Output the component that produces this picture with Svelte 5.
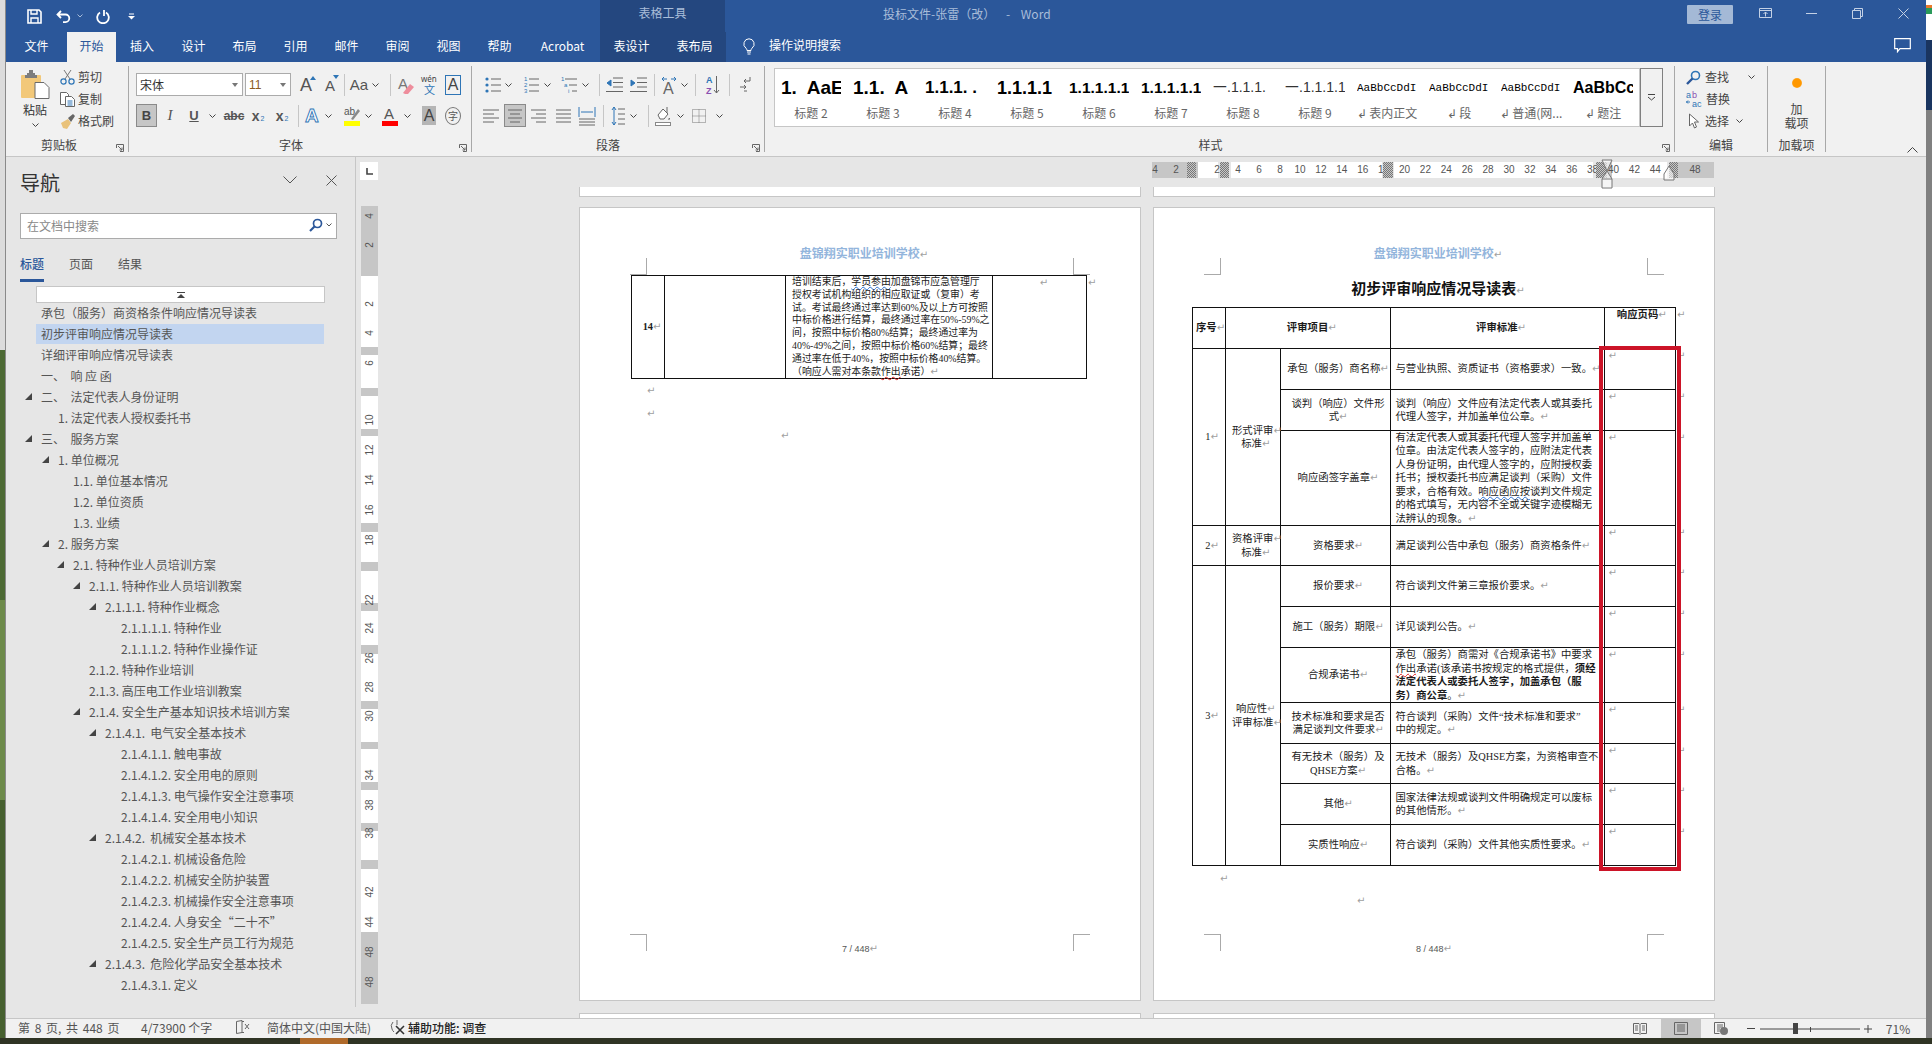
<script>
  const tools = (origin, items) => {
    let cur = origin;
    return items.map(([k, x, w]) => {
      const ml = x - w / 2 - cur;
      cur = x + w / 2;
      return { k, w, ml };
    });
  };
  const stroke = (w, h, d, c = '#666', sw = 1) =>
    `<svg width="${w}" height="${h}" viewBox="0 0 ${w} ${h}"><path d="${d}" fill="none" stroke="${c}" stroke-width="${sw}"/></svg>`;
  const B = '#2e75b6';
  const I = {
    chev: stroke(7, 4, 'M.5.5 3.5 3.5 6.5.5', '#444'),
    sep: '<span class="vsep"></span>',
    name: '<span class="combo"><b class="cn">宋体</b><em></em></span>',
    size: '<span class="combo"><b class="cs">11</b><em></em></span>',
    grow: `<span class="fa big">A<svg width="6" height="4"><path d="M0 4 3 0 6 4" fill="${B}"/></svg></span>`,
    shrink: `<span class="fa small">A<svg width="6" height="4"><path d="M0 0 3 4 6 0" fill="${B}"/></svg></span>`,
    aa: '<span class="fa aa">Aa</span>',
    eraser: `<svg width="16" height="20"><text x="0" y="14" font-size="15" font-family="Liberation Sans" fill="#777">A</text><path d="M5 18 12 9l4 3-6 7H7z" fill="#ee8d9c"/></svg>`,
    wen: `<svg width="16" height="21"><text x="0" y="8" font-size="8" font-family="Noto Sans" fill="#444">wén</text><text x="3" y="20" font-size="11" font-family="Noto Sans CJK SC" fill="${B}">文</text></svg>`,
    abox: '<span class="abox">A</span>',
    b: '<span class="act bold">B</span>',
    i: '<span class="fa it">I</span>',
    u: '<span class="fa un">U</span>',
    abc: '<span class="fa st">abc</span>',
    sub: `<span class="fa xs">x<small>2</small></span>`,
    sup: `<span class="fa xs">x<sup>2</sup></span>`,
    glow: `<svg width="16" height="20"><text x="0" y="16" font-size="19" font-weight="bold" font-family="Liberation Sans" fill="#fff" stroke="${B}" stroke-width=".9">A</text></svg>`,
    mark: `<svg width="16" height="20"><text x="0" y="9" font-size="10" font-family="Liberation Sans" fill="#555">ab</text><path d="M7 13 14 3l2 2-7 9z" fill="#8a8a8a"/><rect y="15" width="16" height="5" fill="#ff0"/></svg>`,
    color: `<svg width="16" height="20"><text x="2" y="13" font-size="15" font-family="Liberation Sans" fill="#555">A</text><rect y="15" width="16" height="5" fill="#f00"/></svg>`,
    shade: '<span class="ashade">A</span>',
    zi: '<span class="zi">字</span>',
    bul: `<svg width="16" height="18"><g fill="${B}"><circle cx="2" cy="3" r="1.6"/><circle cx="2" cy="9" r="1.6"/><circle cx="2" cy="15" r="1.6"/></g><path d="M6 3h10M6 9h10M6 15h10" stroke="#666"/></svg>`,
    num: `<svg width="15" height="20"><g fill="${B}" font-size="6" font-family="Liberation Sans"><text x="0" y="6">1</text><text x="0" y="12">2</text><text x="0" y="18">3</text></g><path d="M5 4h10M5 10h10M5 16h10" stroke="#666"/></svg>`,
    multi: `<svg width="16" height="20"><g fill="${B}" font-size="6" font-family="Liberation Sans"><text x="0" y="6">1</text><text x="3" y="12">a</text><text x="7" y="18">i</text></g><path d="M4 4h12M8 10h8M11 16h5" stroke="#666"/></svg>`,
    dec: `<svg width="17" height="16"><path d="M7 1h10M7 5.500h10M7 10h10M0 14.500h17" stroke="#666"/><path d="M5 3 1 6l4 3z" fill="${B}" stroke="${B}"/></svg>`,
    inc: `<svg width="17" height="16"><path d="M7 1h10M7 5.500h10M7 10h10M0 14.500h17" stroke="#666"/><path d="M1 3l4 3-4 3z" fill="${B}" stroke="${B}"/></svg>`,
    trans: `<svg width="16" height="20"><path d="M1 4h5M15 4h-5M3 2 1 4l2 2M13 2l2 2-2 2" fill="none" stroke="${B}"/><text x="2" y="19" font-size="16" font-family="Liberation Sans" fill="#666">A</text></svg>`,
    az: `<svg width="14" height="22"><text x="0" y="9" font-size="9" font-weight="bold" font-family="Liberation Sans" fill="${B}">A</text><text x="0" y="20" font-size="9" font-weight="bold" font-family="Liberation Sans" fill="#8a4fb0">Z</text><path d="M10.500 2v17M8 16l2.500 3 2.500-3" fill="none" stroke="#666"/></svg>`,
    ret: `<svg width="11" height="18"><path d="M10 1v4H4M6 3 4 5l2 2M0 11h6M4 9l2 2-2 2M4 15h3" fill="none" stroke="#666"/></svg>`,
    al: stroke(16, 14, 'M0 1h16M0 5h11M0 9h16M0 13h11'),
    ac: '<span class="act">' + stroke(14, 14, 'M0 1h14M2 5h10M0 9h14M2 13h10') + '</span>',
    ar: stroke(15, 14, 'M0 1h15M5 5h10M0 9h15M5 13h10'),
    aj: stroke(15, 14, 'M0 1h15M0 5h15M0 9h15M0 13h15'),
    ad: `<svg width="16" height="20"><path d="M0 1v10M16 1v10M2 6h12" stroke="${B}"/><path d="M0 13h16M0 16h16M0 19h16" stroke="#666"/></svg>`,
    ls: `<svg width="14" height="20"><path d="M3 1v18M1 4l2-3 2 3M1 16l2 3 2-3" fill="none" stroke="${B}"/><path d="M7 3h7M7 8h7M7 13h7M7 18h7" stroke="#666"/></svg>`,
    bucket: `<svg width="16" height="20"><path d="M3 9 8 3l5 5-4 5H5z" fill="#fff" stroke="#666"/><path d="M12 1v6" stroke="#666"/><path d="M14 12c-2 2 1 3 1 0z" fill="#666"/><rect x=".5" y="16.500" width="15" height="3" fill="#fff" stroke="#888"/></svg>`,
    border: `<svg width="14" height="14"><path d="M.5.5h13v13H.5zM7 .5v13M.5 7h13" fill="none" stroke="#777" stroke-dasharray="1 1"/></svg>`
  };
  const fontRow1 = tools(130, [['name', 190.5, 107], ['size', 269, 46], ['grow', 307, 18], ['shrink', 331, 16], ['sep', 345, 1], ['aa', 360, 18], ['chev', 376, 7], ['sep', 391, 1], ['eraser', 407, 16], ['wen', 430, 16], ['abox', 454, 16]]);
  const fontRow2 = tools(130, [['b', 147.5, 21], ['i', 171, 10], ['u', 195, 12], ['chev', 213, 7], ['abc', 235, 20], ['sub', 259, 14], ['sup', 283, 14], ['sep', 299, 1], ['glow', 314, 16], ['chev', 329, 7], ['mark', 353, 16], ['chev', 369, 7], ['color', 391, 16], ['chev', 408, 7], ['shade', 430, 14], ['zi', 454, 16]]);
  const paraRow1 = tools(473, [['bul', 494, 16], ['chev', 509, 7], ['num', 532, 15], ['chev', 548, 7], ['multi', 570, 16], ['chev', 586, 7], ['sep', 600, 1], ['dec', 615, 17], ['inc', 639, 17], ['sep', 655, 1], ['trans', 670, 16], ['chev', 685, 7], ['sep', 696, 1], ['az', 714, 14], ['sep', 730, 1], ['ret', 746, 11]]);
  const paraRow2 = tools(473, [['al', 492, 16], ['ac', 516, 22], ['ar', 539, 15], ['aj', 564, 15], ['ad', 588, 16], ['sep', 604, 1], ['ls', 619, 14], ['chev', 634, 7], ['sep', 649, 1], ['bucket', 664, 16], ['chev', 681, 7], ['border', 700, 14], ['chev', 720, 7]]);

  const tabs = [['文件', 61], ['开始', 49, 'on'], ['插入', 52], ['设计', 51], ['布局', 51], ['引用', 51], ['邮件', 51], ['审阅', 51], ['视图', 51], ['帮助', 51], ['Acrobat', 75], ['表设计', 63, 'ctx'], ['表布局', 63, 'ctx']];

  const styles = [
    ['1.  AaE', '标题 2', 'h1'], ['1.1.  A', '标题 3', 'h1'], ['1.1.1. .', '标题 4', 'h2'], ['1.1.1.1', '标题 5', 'h2b'],
    ['1.1.1.1.1', '标题 6', 'h3'], ['1.1.1.1.1', '标题 7', 'h3'], ['一.1.1.1.', '标题 8', 'h4'], ['一.1.1.1.1', '标题 9', 'h4'],
    ['AaBbCcDdI', '↲ 表内正文', 'h5'], ['AaBbCcDdI', '↲ 段', 'h5'], ['AaBbCcDdI', '↲ 普通(网...', 'h5'], ['AaBbCc', '↲ 题注', 'h6']
  ];

  const tree = [
    [41, 0, '承包（服务）商资格条件响应情况导读表'], [41, 0, '初步评审响应情况导读表', 1], [41, 0, '详细评审响应情况导读表'], [41, 0, '一、  响 应 函'],
    [41, 1, '二、  法定代表人身份证明'], [58, 0, '1. 法定代表人授权委托书'], [41, 1, '三、  服务方案'], [58, 1, '1. 单位概况'],
    [73, 0, '1.1. 单位基本情况'], [73, 0, '1.2. 单位资质'], [73, 0, '1.3. 业绩'], [58, 1, '2. 服务方案'],
    [73, 1, '2.1. 特种作业人员培训方案'], [89, 1, '2.1.1. 特种作业人员培训教案'], [105, 1, '2.1.1.1. 特种作业概念'],
    [121, 0, '2.1.1.1.1. 特种作业'], [121, 0, '2.1.1.1.2. 特种作业操作证'], [89, 0, '2.1.2. 特种作业培训'], [89, 0, '2.1.3. 高压电工作业培训教案'],
    [89, 1, '2.1.4. 安全生产基本知识技术培训方案'], [105, 1, '2.1.4.1.  电气安全基本技术'], [121, 0, '2.1.4.1.1. 触电事故'], [121, 0, '2.1.4.1.2. 安全用电的原则'],
    [121, 0, '2.1.4.1.3. 电气操作安全注意事项'], [121, 0, '2.1.4.1.4. 安全用电小知识'], [105, 1, '2.1.4.2.  机械安全基本技术'], [121, 0, '2.1.4.2.1. 机械设备危险'],
    [121, 0, '2.1.4.2.2. 机械安全防护装置'], [121, 0, '2.1.4.2.3. 机械操作安全注意事项'], [121, 0, '2.1.4.2.4. 人身安全“二十不”'], [121, 0, '2.1.4.2.5. 安全生产员工行为规范'],
    [105, 1, '2.1.4.3.  危险化学品安全基本技术'], [121, 0, '2.1.4.3.1. 定义']
  ];

  const hseg = [[35, 'g'], [9, 'h'], [2, 'g'], [20, 'w'], [2, 'x'], [9, 'h'], [2, 'x'], [151, 'w'], [1, 'x'], [10, 'h'], [1, 'x'], [199, 'w'], [3, 'x'], [11, 'h'], [5, 'g'], [55, 'w'], [2, 'x'], [9, 'h'], [36, 'g']];
  const hnums = [[3, '4'], [24, '2'], [65, '2'], [86, '4'], [107, '6'], [128, '8']];
  for (let n = 10, x = 148; n <= 44; n += 2, x += 20.9) hnums.push([x, String(n)]);
  hnums.push([543, '48']);

  const gaps = [[206, 276], [347, 355], [388, 396], [429, 436], [523, 532], [562, 571], [603, 611], [645, 654], [701, 709], [742, 749], [782, 790], [823, 831], [860, 869], [932, 1004]];
  const vseg = [];
  gaps.forEach(([a, b], i) => {
    vseg.push([b - a, 'g']);
    if (gaps[i + 1]) vseg.push([gaps[i + 1][0] - b, 'w']);
  });
  const vnums = [[216, '4'], [245, '2'], [304, '2'], [333, '4'], [363, '6'], [420, '10'], [450, '12'], [480, '14'], [510, '16'], [540, '18'], [600, '22'], [628, '24'], [658, '26'], [687, '28'], [716, '30'], [775, '34'], [805, '38'], [833, '38'], [892, '42'], [922, '44'], [952, '48'], [982, '48']];

  const fmt = (s) => s.replaceAll('↵', '<i class="pm">↵</i>');

  const colsR = [33, 54.5, 110, 214, 71.5];
  const rowsR = [
    { h: 41, c: [{ t: '1↵', rs: 3 }, { t: '形式评审↵\n标准↵', rs: 3 }], a: '承包（服务）商名称↵', b: '与营业执照、资质证书（资格要求）一致。↵' },
    { h: 41, a: '谈判（响应）文件形\n式↵', b: '谈判（响应）文件应有法定代表人或其委托\n代理人签字，并加盖单位公章。↵' },
    { h: 95, a: '响应函签字盖章↵', b: '有法定代表人或其委托代理人签字并加盖单\n位章。由法定代表人签字的，应附法定代表\n人身份证明，由代理人签字的，应附授权委\n托书；授权委托书应满足谈判（采购）文件\n要求，合格有效。<u class="wb">响应函应按</u>谈判文件规定\n的格式填写，无内容不全或关键字迹模糊无\n法辨认的现象。↵' },
    { h: 40, c: [{ t: '2↵' }, { t: '资格评审↵\n标准↵' }], a: '资格要求↵', b: '满足谈判公告中承包（服务）商资格条件↵' },
    { h: 41, c: [{ t: '3↵', rs: 7 }, { t: '响应性↵\n评审标准↵', rs: 7 }], a: '报价要求↵', b: '符合谈判文件第三章报价要求。↵' },
    { h: 41, a: '施工（服务）期限↵', b: '详见谈判公告。↵' },
    { h: 55, a: '合规承诺书↵', b: '承包（服务）商需对《合规承诺书》中要求\n<u class="wr">作出</u>承诺(该承诺书按规定的格式提供，<b>须经\n法定代表人或委托人签字，加盖承包（服\n务）商公章</b>。↵' },
    { h: 41, a: '技术标准和要求是否\n满足谈判文件要求↵', b: '符合谈判（采购）文件“技术标准和要求”\n中的规定。↵' },
    { h: 40, a: '有无技术（服务）及\nQHSE方案↵', b: '无技术（服务）及QHSE方案，为资格审查不\n合格。↵' },
    { h: 41, a: '其他↵', b: '国家法律法规或谈判文件明确规定可以废标\n的其他情形。↵' },
    { h: 41, a: '实质性响应↵', b: '符合谈判（采购）文件其他实质性要求。↵' }
  ];
  const colsL = [33, 121, 207, 94];
  const leftText = '培训结束后，<u class="wb">学员参由</u>加盘锦市应急管理厅\n授权考试机构组织的相应取证或（复审）考\n试。考试最终通过率达到60%及以上方可按照\n中标价格进行结算，最终通过率在50%-59%之\n间，按照中标价格80%结算；最终通过率为\n40%-49%之间，按照中标价格60%结算；最终\n通过率在低于40%，按照中标价格40%结算。\n（响应人需对本条款<u class="wr">作出</u>承诺）↵';

  const statusRight = tools(1626, [
    ['read', 1640, 14], ['print', 1681, 40], ['web', 1721, 14], ['minus', 1751, 8], ['slider', 1810, 100], ['plus', 1868, 8], ['zoom', 1898, 28]
  ]);
  const S = {
    read: stroke(14, 14, 'M.5 1.500h5.500l1 1 1-1h5.500v10h-5.500l-1 1-1-1H.5zM7 2.500v9M2 4h3M2 6h3M2 8h3M9 4h3M9 6h3M9 8h3', '#666'),
    print: '<span class="printon">' + stroke(14, 13, 'M.5.5h13v12H.5zM3 3h8M3 5h8M3 7h8M3 9h8', '#666') + '</span>',
    web: `<svg width="14" height="13"><path d="M.5.5h10v5M.5.5v11h5M3 3h6M3 5h6M3 7h3M3 9h3" fill="none" stroke="#666"/><circle cx="10" cy="9" r="4" fill="#777"/></svg>`,
    minus: stroke(8, 3, 'M0 1.500h8', '#444'),
    plus: stroke(8, 8, 'M0 4h8M4 0v8', '#444'),
    slider: `<svg width="100" height="12"><path d="M0 6h100M50.500 4v5" stroke="#444" fill="none"/><rect x="33" y="0" width="5" height="11" fill="#444"/></svg>`,
    zoom: '<span class="pct">71%</span>'
  };
</script>

<div class="screen">
  <div class="desk">
    <div class="edge-left"></div>
    <div class="window">
      <header class="titlebar">
        <div class="qat">
          <svg class="q-save" width="15" height="15" viewBox="0 0 15 15"><path d="M1 1h11l2 2v11H1z" fill="none" stroke="#fff" stroke-width="1.600"/><path d="M4 1v4h6V1M4 14V9h7v5" fill="none" stroke="#fff" stroke-width="1.400"/></svg>
          <svg class="q-undo" width="15" height="15" viewBox="0 0 15 15"><path d="M5 2 1.500 5.500 5 9M2 5.500h7.500a3.800 3.800 0 0 1 0 7.600H7" fill="none" stroke="#fff" stroke-width="1.800"/></svg>
          <svg class="q-c" width="6" height="4" viewBox="0 0 6 4"><path d="M.5.5 3 3 5.500.5" fill="none" stroke="#a9bdd9"/></svg>
          <svg class="q-redo" width="14" height="15" viewBox="0 0 14 15"><path d="M4 3.500a5.800 5.800 0 1 0 6 0M8 1v6" fill="none" stroke="#fff" stroke-width="1.800"/></svg>
          <svg class="q-more" width="7" height="7" viewBox="0 0 7 7"><path d="M1 1h5" stroke="#fff"/><path d="M0 3h7L3.500 6.500z" fill="#fff"/></svg>
        </div>
        <div class="ctx-title">表格工具</div>
        <div class="doc-title">投标文件-张雷（改）    -    Word</div>
        <div class="win">
          <span class="login">登录</span>
          <span class="wc"><svg width="13" height="11"><path d="M.5.500h12v9H.5zM.5 2.500h12M6.500 8.500V4M4.500 6l2-2 2 2" fill="none" stroke="#c4d1e5"/></svg></span>
          <span class="wc"><svg width="11" height="1"><path d="M0 .5h11" stroke="#c4d1e5"/></svg></span>
          <span class="wc"><svg width="11" height="11"><path d="M.5 2.500h8v8h-8zM2.500 2.500v-2h8v8h-2" fill="none" stroke="#c4d1e5"/></svg></span>
          <span class="wc"><svg width="11" height="11"><path d="M.5.500l10 10M10.500.500l-10 10" fill="none" stroke="#c4d1e5"/></svg></span>
        </div>
      </header>

      <nav class="tabbar">
        {#each tabs as [label, width, kind]}
          <span class="tab" class:on={kind === 'on'} class:ctx={kind === 'ctx'} style:width="{width}px">{label}</span>
        {/each}
        <svg class="bulb" width="12" height="17" viewBox="0 0 12 17"><path d="M6 .8a5.200 5.200 0 0 0-3 9.400c.7.600 1 1.500 1 2.300h4c0-.8.300-1.700 1-2.300A5.200 5.200 0 0 0 6 .8zM4 14h4M4.500 16h3" fill="none" stroke="#fff"/></svg>
        <span class="tell">操作说明搜索</span>
        <svg class="comment" width="17" height="15" viewBox="0 0 17 15"><path d="M.7.700h15.600v10H6l-2.500 3v-3H.7z" fill="none" stroke="#fff" stroke-width="1.200"/></svg>
      </nav>

      <section class="ribbon">
        <div class="group g-clip">
          <div class="clip-body">
            <div class="paste">
              <svg width="30" height="29" viewBox="0 0 30 29"><rect x="1" y="5" width="20" height="23" rx="1" fill="#f2c879"/><path d="M7 5V3h2V0h4v3h2v2h2v3H5V5z" fill="#7d7d7d"/><path d="M15 12.500h9l5 5V28.500H15z" fill="#fff" stroke="#6a6a6a"/></svg>
              <span class="paste-l">粘贴</span>
              {@html I.chev}
            </div>
            <div class="clip-list">
              <div class="line"><svg width="15" height="15" viewBox="0 0 15 15"><path d="M5 9 11 0M10 9 4 0" stroke="#777" fill="none"/><circle cx="3.500" cy="11.500" r="2.600" fill="none" stroke={B} stroke-width="1.200"/><circle cx="11.500" cy="11.500" r="2.600" fill="none" stroke={B} stroke-width="1.200"/></svg>剪切</div>
              <div class="line"><svg width="15" height="15" viewBox="0 0 15 15"><path d="M.5.500h6l2 2v10H.5z" fill="#fff" stroke="#666"/><path d="M5.500 4.500h6l3 3v7h-9z" fill="#fff" stroke="#666"/><path d="M7.500 9h5M7.500 11h5M7.500 13h5" stroke="#2e75b6"/></svg>复制</div>
              <div class="line"><svg width="15" height="15" viewBox="0 0 15 15"><path d="M1 9 8 5l3 4-4 6-4-1z" fill="#e9c27a"/><path d="M8 4l5-4 2 2-4 6z" fill="#666"/></svg>格式刷</div>
            </div>
          </div>
          <div class="g-label">剪贴板</div>
          <svg class="launch" width="8" height="8"><path d="M.5 4V.5H7.500V7.500H4M2 2l4 4M6 3.500V6H3.500" fill="none" stroke="#666"/></svg>
        </div>

        <div class="group g-font">
          <div class="row r1">{#each fontRow1 as t}<span class="tool" style:width="{t.w}px" style:margin-left="{t.ml}px">{@html I[t.k]}</span>{/each}</div>
          <div class="row r2">{#each fontRow2 as t}<span class="tool" style:width="{t.w}px" style:margin-left="{t.ml}px">{@html I[t.k]}</span>{/each}</div>
          <div class="g-label">字体</div>
          <svg class="launch" width="8" height="8"><path d="M.5 4V.5H7.500V7.500H4M2 2l4 4M6 3.500V6H3.500" fill="none" stroke="#666"/></svg>
        </div>

        <div class="group g-para">
          <div class="row r1">{#each paraRow1 as t}<span class="tool" style:width="{t.w}px" style:margin-left="{t.ml}px">{@html I[t.k]}</span>{/each}</div>
          <div class="row r2">{#each paraRow2 as t}<span class="tool" style:width="{t.w}px" style:margin-left="{t.ml}px">{@html I[t.k]}</span>{/each}</div>
          <div class="g-label">段落</div>
          <svg class="launch" width="8" height="8"><path d="M.5 4V.5H7.500V7.500H4M2 2l4 4M6 3.500V6H3.500" fill="none" stroke="#666"/></svg>
        </div>

        <div class="group g-styles">
          <div class="gallery">
            <div class="gal-items">
              {#each styles as [preview, caption, cls]}
                <div class="sty">
                  <div class="prev {cls}">{preview}</div>
                  <div class="cap">{caption}</div>
                </div>
              {/each}
            </div>
            <div class="gal-more"><svg width="9" height="7"><path d="M1 .5h7" stroke="#444"/><path d="M1 3l3.500 3L8 3" fill="none" stroke="#444"/></svg></div>
          </div>
          <div class="g-label">样式</div>
          <svg class="launch" width="8" height="8"><path d="M.5 4V.5H7.500V7.500H4M2 2l4 4M6 3.500V6H3.500" fill="none" stroke="#666"/></svg>
        </div>

        <div class="group g-edit">
          <div class="edit-list">
            <div class="line"><svg width="15" height="15" viewBox="0 0 15 15"><circle cx="9.500" cy="5.500" r="4" fill="none" stroke="#2e75b6" stroke-width="1.600"/><path d="M6.500 8.500 1 14" stroke="#2b579a" stroke-width="2.400"/></svg>查找<span class="c1">{@html I.chev}</span></div>
            <div class="line"><svg width="16" height="16" viewBox="0 0 16 16"><text x="0" y="7" font-size="9" font-family="Liberation Sans" fill="#2e75b6">a</text><text x="6" y="7" font-size="9" font-family="Liberation Sans" fill="#8a4fb0">b</text><text x="6" y="15.500" font-size="9" font-family="Liberation Sans" fill="#2e75b6">ac</text><path d="M0 11h4M2 9.500 .5 11 2 12.500" stroke="#2e75b6" fill="none"/></svg>替换</div>
            <div class="line"><svg width="15" height="17" viewBox="0 0 15 17"><path d="M3.500 1v12l3-3 2 5 2-1-2-5h4z" fill="#fff" stroke="#666"/></svg>选择<span class="c2">{@html I.chev}</span></div>
          </div>
          <div class="g-label">编辑</div>
        </div>

        <div class="group g-addin">
          <span class="dot"></span>
          <span class="add-txt">加<br />载项</span>
          <div class="g-label">加载项</div>
        </div>
        <svg class="collapse" width="11" height="6" viewBox="0 0 11 6"><path d="M.5 5.500l5-5 5 5" fill="none" stroke="#444"/></svg>
      </section>

      <main class="workspace">
        <aside class="nav">
          <div class="nav-head">
            <span class="nav-title">导航</span>
            <svg class="n-down" width="14" height="8" viewBox="0 0 14 8"><path d="M.5.500l6.500 6.500 6.500-6.500" fill="none" stroke="#555"/></svg>
            <svg class="n-close" width="11" height="11" viewBox="0 0 11 11"><path d="M.5.500l10 10M10.500.500l-10 10" fill="none" stroke="#555"/></svg>
          </div>
          <div class="search">
            <span>在文档中搜索</span>
            <svg class="s-ic" width="14" height="14" viewBox="0 0 14 14"><circle cx="8.500" cy="5.500" r="4" fill="none" stroke="#2b579a" stroke-width="1.700"/><path d="M5.500 8.500 1 13" stroke="#2b579a" stroke-width="2.200"/></svg>
            <svg class="s-c" width="6" height="4" viewBox="0 0 6 4"><path d="M.5.500 3 3 5.500.5" fill="none" stroke="#555"/></svg>
          </div>
          <div class="nav-tabs">
            <span class="nt on">标题</span><span class="nt">页面</span><span class="nt">结果</span>
          </div>
          <div class="tree-up"><svg width="8" height="6" viewBox="0 0 8 6"><path d="M0 .5h8" stroke="#444"/><path d="M0 6l4-4 4 4z" fill="#444"/></svg></div>
          <div class="tree">
            {#each tree as [x, arrow, text, sel]}
              <div class="node" class:sel style:padding-left="{x - 36}px">
                <span class="arr">{#if arrow}<svg width="7" height="7" viewBox="0 0 7 7"><path d="M7 0v7H0z" fill="#444"/></svg>{/if}</span>{text}
              </div>
            {/each}
          </div>
        </aside>

        <div class="vcol">
          <div class="corner"><svg width="7" height="7" viewBox="0 0 7 7"><path d="M1 0v6h6" fill="none" stroke="#444" stroke-width="1.600"/></svg></div>
          <div class="vruler">
            {#each vseg as [h, t]}<div class="seg-{t}" style:height="{h}px"></div>{/each}
            {#each vnums as [y, n]}<span class="vnum" style:top="{y - 206 - 8}px">{n}</span>{/each}
          </div>
        </div>

        <div class="doc">
          <div class="hruler">
            {#each hnums as [x, n]}<span class="hnum" style:left="{x}px">{n}</span>{/each}
            <div class="hsegs">
              {#each hseg as [w, t]}<div class="seg-{t}" style:width="{w}px"></div>{/each}
            </div>
            <svg class="ind-a" width="12" height="30" viewBox="0 0 12 30"><path d="M1 1h10L6 12l5 8v9H1v-9l5-8z" fill="#fff" stroke="#777" fill-opacity=".6"/><path d="M1 20h10" stroke="#777"/></svg>
            <svg class="ind-b" width="12" height="16" viewBox="0 0 12 16"><path d="M6 1l5 8v6H1V9z" fill="#fff" stroke="#777" fill-opacity=".6"/></svg>
          </div>

          <div class="pages">
            <div class="pcol">
              <div class="strip top"></div>
              <article class="page">
                <span class="crop tl"></span><span class="crop tr"></span><span class="crop bl"></span><span class="crop br"></span>
                <div class="hdr">盘锦翔实职业培训学校<i class="pm">↵</i></div>
                <table class="tl-table">
                  <colgroup>{#each colsL as w}<col style:width="{w}px" />{/each}</colgroup>
                  <tbody>
                    <tr>
                      <td class="c num14"><b>14</b><i class="pm">↵</i></td>
                      <td></td>
                      <td class="body-l">{@html fmt(leftText)}</td>
                      <td class="c top-m"><i class="pm">↵</i><i class="pm end">↵</i></td>
                    </tr>
                  </tbody>
                </table>
                <div class="mk m1"><i class="pm">↵</i></div>
                <div class="mk m2"><i class="pm">↵</i></div>
                <div class="mk m3"><i class="pm">↵</i></div>
                <div class="foot">7 / 448<i class="pm">↵</i></div>
              </article>
              <div class="strip bottom"></div>
            </div>

            <div class="pcol">
              <div class="strip top"></div>
              <article class="page">
                <span class="crop tl"></span><span class="crop tr"></span><span class="crop bl"></span><span class="crop br"></span>
                <div class="hdr">盘锦翔实职业培训学校<i class="pm">↵</i></div>
                <h1 class="ttl">初步评审响应情况导读表<i class="pm">↵</i></h1>
                <table class="tr-table">
                  <colgroup>{#each colsR as w}<col style:width="{w}px" />{/each}</colgroup>
                  <tbody>
                    <tr class="hd">
                      <td class="c xh"><b>序号</b><i class="pm">↵</i></td>
                      <td class="c ph8" colspan="2"><b>评审项目</b><i class="pm">↵</i></td>
                      <td class="c ph8"><b>评审标准</b><i class="pm">↵</i></td>
                      <td class="c vtop"><b>响应页码</b><i class="pm">↵</i><i class="pm end">↵</i></td>
                    </tr>
                    {#each rowsR as r}
                      <tr style:height="{r.h}px">
                        {#if r.c}{#each r.c as cell}<td class="c ph6" rowspan={cell.rs || 1}>{@html fmt(cell.t)}</td>{/each}{/if}
                        <td class="c ph6">{@html fmt(r.a)}</td>
                        <td class="std"><div class="fit">{@html fmt(r.b)}</div></td>
                        <td class="resp"><i class="pm">↵</i><i class="pm end">↵</i></td>
                      </tr>
                    {/each}
                  </tbody>
                </table>
                <div class="mk m4"><i class="pm">↵</i></div>
                <div class="mk m5"><i class="pm">↵</i></div>
                <div class="foot">8 / 448<i class="pm">↵</i></div>
                <div class="redbox"></div>
              </article>
              <div class="strip bottom"></div>
            </div>
          </div>
        </div>
      </main>

      <footer class="status">
        <span class="st-first">第 8 页, 共 448 页</span>
        <span>4/73900 个字</span>
        <span class="st-ic"><svg width="14" height="14" viewBox="0 0 14 14"><path d="M.5 1.500 6 .5v12l-5.500 1zM6 1.500h2M6 12.500h2" fill="none" stroke="#666"/><path d="M9 4l4 5M13 4 9 9" stroke="#666" fill="none"/></svg></span>
        <span>简体中文(中国大陆)</span>
        <span class="st-ic"><svg width="16" height="16" viewBox="0 0 16 16"><path d="M8 1v5M4 3a6 6 0 0 0-1 7 6 6 0 0 0 2 3" fill="none" stroke="#666"/><path d="M7 7l8 8M15 7l-8 8" stroke="#333" stroke-width="1.600"/></svg></span>
        <span class="acc">辅助功能: 调查</span>
        <div class="st-right">
          {#each statusRight as t}<span class="tool st-tool" style:width="{t.w}px" style:margin-left="{t.ml}px">{@html S[t.k]}</span>{/each}
        </div>
      </footer>
    </div>
    <div class="edge-right"><span class="er-a"></span><span class="er-b"></span><span class="er-c"></span></div>
  </div>
  <div class="taskbar"><span></span></div>
</div>

<style>
  :global(body) { margin: 0; background: #2f3424; overflow: hidden; }
  .screen { width: 1932px; height: 1044px; display: flex; flex-direction: column; font-family: "Noto Sans CJK SC", sans-serif; font-size: 12px; color: #444; }
  .desk { display: flex; height: 1038px; }
  .edge-left { width: 5px; background: linear-gradient(#dcdcdc 0 350px, #4d6a35 350px 600px, #6d8a4a 600px 800px, #46602f 800px); }
  .window { width: 1921px; display: flex; flex-direction: column; background: #e6e6e6; border-left: 1px solid #8a8a8a; box-sizing: border-box; }
  .edge-right { width: 6px; display: flex; flex-direction: column; }
  .er-a { height: 40px; background: linear-gradient(#fff 0 5px, #e87a2c 5px 8px, #2a9a5a 8px 14px, #fff 14px); }
  .er-b { height: 70px; background: #1a3560; }
  .er-c { flex: 1; background: #808080; }
  .taskbar { height: 6px; background: #2f3424; padding-left: 300px; }
  .taskbar span { display: block; width: 48px; height: 6px; background: #b06a2a; }

  /* title */
  .titlebar { height: 32px; background: #2b579a; display: flex; align-items: stretch; flex: none; }
  .qat { width: 594px; display: flex; align-items: center; padding-left: 21px; box-sizing: border-box; }
  .q-undo { margin-left: 14px; }
  .q-c { margin-left: 6px; }
  .q-redo { margin-left: 13px; }
  .q-more { margin-left: 18px; }
  .ctx-title { width: 125px; background: #24477f; color: #a9bdd9; text-align: center; line-height: 26px; }
  .doc-title { margin-left: 158px; color: #a9bdd9; line-height: 28px; white-space: pre; }
  .win { margin-left: auto; display: flex; }
  .login { width: 46px; height: 19px; margin-top: 5px; margin-right: 9px; background: #a4b9d6; color: #2b579a; text-align: center; line-height: 19px; border-radius: 1px; }
  .wc { width: 46px; height: 27px; display: flex; align-items: center; justify-content: center; }

  /* tabs */
  .tabbar { height: 30px; background: #2b579a; display: flex; align-items: stretch; flex: none; position: relative; color: #fff; }
  .tab { display: flex; align-items: center; justify-content: center; padding-bottom: 3px; box-sizing: border-box; }
  .tab.on { background: #f1f1f1; color: #2b579a; }
  .tab.ctx { background: #24477f; }
  .bulb { margin: 6px 0 0 17px; }
  .tell { margin-left: 14px; line-height: 26px; }
  .comment { margin: 6px 15px 0 auto; }

  /* ribbon */
  .ribbon { height: 95px; flex: none; background: #f1f1f1; border-bottom: 1px solid #c6c6c6; box-sizing: border-box; display: flex; padding-top: 4px; position: relative; }
  .group { height: 86px; box-sizing: border-box; border-right: 1px solid #a8a8a8; position: relative; display: flex; flex-direction: column; flex: none; }
  .g-clip { width: 123px; }
  .g-font { width: 343px; }
  .g-para { width: 293px; }
  .g-styles { width: 910px; }
  .g-edit { width: 93px; }
  .g-addin { width: 58px; align-items: center; }
  .g-label { margin-top: auto; margin-bottom: -1px; width: 100%; box-sizing: border-box; text-align: center; line-height: 16px; color: #444; }
  .g-clip .g-label { padding-right: 16px; }
  .g-font .g-label { padding-right: 18px; }
  .g-para .g-label { padding-right: 20px; }
  .g-styles .g-label { padding-right: 18px; }
  .launch { position: absolute; right: 4px; bottom: 0; }
  .row { display: flex; align-items: center; height: 23px; }
  .r1 { margin-top: 7px; }
  .r2 { margin-top: 8px; }
  .tool { display: flex; align-items: center; justify-content: center; flex: none; height: 23px; }
  .tool :global(svg) { display: block; flex: none; overflow: visible; }
  .tool :global(.vsep) { width: 1px; height: 22px; background: #c6c6c6; }
  .tool :global(.combo) { width: 100%; height: 23px; box-sizing: border-box; background: #fff; border: 1px solid #ababab; display: flex; align-items: center; padding: 0 3px; position: relative; }
  .tool :global(.combo b) { font-weight: 400; color: #333; }
  .tool :global(.combo .cs) { color: #8a5a20; font-family: "Liberation Sans", sans-serif; }
  .tool :global(.combo em) { position: absolute; right: 4px; top: 9px; border: 3px solid transparent; border-top: 4px solid #777; border-bottom: 0; }
  .tool :global(.fa) { font-family: "Liberation Sans", sans-serif; color: #555; display: flex; position: relative; }
  .tool :global(.big) { font-size: 18px; line-height: 20px; }
  .tool :global(.small) { font-size: 15px; line-height: 20px; padding-top: 2px; }
  .tool :global(.big svg), .tool :global(.small svg) { position: absolute; right: -4px; top: 1px; }
  .tool :global(.aa) { font-size: 15px; }
  .tool :global(.it) { font-style: italic; font-family: "Liberation Serif", serif; font-size: 15px; }
  .tool :global(.un) { font-size: 13px; font-weight: 700; text-decoration: underline; }
  .tool :global(.st) { font-size: 12px; font-weight: 700; text-decoration: line-through; }
  .tool :global(.xs) { font-size: 14px; font-weight: 700; align-items: baseline; }
  .tool :global(.xs small) { font-size: 7px; font-weight: 400; color: #2e75b6; margin-left: 1px; }
  .tool :global(.xs sup) { font-size: 7px; font-weight: 400; color: #2e75b6; margin-left: 1px; line-height: 0; }
  .tool :global(.abox) { width: 16px; height: 20px; box-sizing: border-box; border: 1px solid #2e75b6; font: 16px/18px "Liberation Sans", sans-serif; text-align: center; color: #444; }
  .tool :global(.act) { width: 100%; height: 23px; box-sizing: border-box; background: #c6c6c6; border: 1px solid #8a8a8a; display: flex; align-items: center; justify-content: center; }
  .tool :global(.bold) { font: 700 13px "Liberation Sans", sans-serif; color: #444; }
  .tool :global(.ashade) { width: 14px; height: 19px; background: #b5b5b5; color: #444; font: 16px/19px "Liberation Sans", sans-serif; text-align: center; }
  .tool :global(.zi) { width: 16px; height: 16px; border: 1px solid #777; border-radius: 50%; font-size: 10px; line-height: 16px; text-align: center; color: #555; }

  .clip-body { display: flex; }
  .paste { width: 36px; margin-left: 11px; display: flex; flex-direction: column; align-items: center; padding-top: 4px; }
  .paste-l { line-height: 16px; margin-top: 3px; margin-bottom: 5px; color: #333; }
  .clip-list, .edit-list { display: flex; flex-direction: column; }
  .clip-list { margin-left: 7px; }
  .edit-list { padding-left: 11px; }
  .line { height: 22px; display: flex; align-items: center; gap: 3px; color: #444; line-height: 20px; }
  .edit-list .line { gap: 4px; }
  .line svg { flex: none; }
  .c1 { margin-left: 15px; display: flex; }
  .c2 { margin-left: 3px; display: flex; }

  .gallery { margin: 2px 0 0 9px; display: flex; height: 59px; }
  .gal-items { width: 866px; box-sizing: border-box; background: #fff; border: 1px solid #c6c6c6; display: flex; overflow: hidden; }
  .gal-more { width: 23px; box-sizing: border-box; border: 1px solid #808080; display: flex; align-items: center; justify-content: center; }
  .sty { width: 72px; flex: none; }
  .prev { height: 38px; display: flex; align-items: center; overflow: hidden; white-space: pre; color: #000; margin: 0 6px; font-family: "Liberation Sans", sans-serif; justify-content: flex-start; }
  .h1 { font-size: 19px; font-weight: 700; }
  .h2 { font-size: 17px; font-weight: 700; }
  .h2b { font-size: 18px; font-weight: 700; }
  .h3 { font-size: 15.5px; font-weight: 700; }
  .h4 { font-size: 14px; font-weight: 400; color: #333; }
  .h5 { font: 11px "Liberation Mono", monospace; }
  .h6 { font-size: 16px; font-weight: 700; }
  .cap { text-align: center; color: #666; line-height: 16px; margin-top: -2px; }

  .dot { width: 10px; height: 10px; border-radius: 50%; margin-top: 12px; background: radial-gradient(circle, #ff9800 55%, #ffc870 100%); }
  .add-txt { margin-top: 14px; text-align: center; line-height: 14px; color: #444; }
  .collapse { position: absolute; right: 8px; bottom: 3px; }

  /* workspace */
  .workspace { height: 861px; flex: none; display: flex; overflow: hidden; background: #e6e6e6; }
  .nav { width: 350px; flex: none; box-sizing: border-box; border-right: 1px solid #c6c6c6; padding-left: 14px; height: 850px; }
  .nav-head { height: 24px; margin-top: 14px; display: flex; align-items: center; }
  .nav-title { font-size: 20px; color: #333; line-height: 24px; }
  .n-down { margin-left: 223px; margin-top: -6px; }
  .n-close { margin-left: 29px; margin-top: -6px; }
  .search { width: 317px; height: 26px; box-sizing: border-box; margin-top: 18px; background: #fff; border: 1px solid #ababab; display: flex; align-items: center; padding: 0 0 2px 6px; color: #888; }
  .s-ic { margin-left: auto; }
  .s-c { margin: 0 4px 0 3px; }
  .nav-tabs { display: flex; margin-top: 16px; gap: 25px; }
  .nt { height: 24px; line-height: 18px; color: #555; box-sizing: content-box; padding-bottom: 3px; }
  .nt.on { color: #2b579a; border-bottom: 3px solid #2b579a; padding-bottom: 0; font-weight: 500; }
  .tree-up { width: 289px; height: 17px; box-sizing: border-box; margin: 4px 0 0 16px; background: #fff; border: 1px solid #c6c6c6; display: flex; align-items: center; justify-content: center; }
  .tree { margin-left: 16px; }
  .node { height: 21px; line-height: 19px; color: #555; white-space: pre; width: 288px; box-sizing: border-box; display: flex; }
  .node.sel { background: #c2d5f0; height: 20px; margin: 0 0 1px; }
  .arr { width: 16px; margin-left: -16px; flex: none; padding: 6px 0 0 0; box-sizing: border-box; }
  .arr svg { display: block; }

  .vcol { width: 23px; flex: none; padding: 5px 0 0 4px; box-sizing: border-box; }
  .corner { width: 18px; height: 18px; background: #fff; display: flex; align-items: center; justify-content: center; }
  .vruler { margin: 26px 0 0 1px; width: 17px; position: relative; }
  .seg-g, .seg-h { background: #c6c6c6; }
  .seg-w { background: #fff; }
  .vnum { position: absolute; left: 0; width: 17px; height: 16px; text-align: center; line-height: 16px; font-family: "Liberation Sans", sans-serif; font-size: 10px; color: #555; transform: rotate(-90deg); }

  .doc { flex: 1; min-width: 0; }
  .hruler { margin: 5px 0 0 773px; width: 562px; height: 16px; position: relative; }
  .hsegs { display: flex; height: 16px; }
  .hsegs .seg-h { background: repeating-conic-gradient(#777 0 25%, #c6c6c6 0 50%) 0 0 / 2px 2px; position: relative; z-index: 2; }
  .hnum { position: absolute; top: 0; z-index: 1; width: 20px; margin-left: -10px; text-align: center; line-height: 16px; font-family: "Liberation Sans", sans-serif; font-size: 10px; color: #555; }
  .ind-a { position: absolute; left: 449px; top: -3px; z-index: 3; }
  .ind-b { position: absolute; left: 511px; top: 3px; z-index: 3; }

  .pages { display: flex; gap: 12px; padding-left: 200px; margin-top: 9px; }
  .pcol { width: 562px; flex: none; display: flex; flex-direction: column; }
  .strip { background: #fff; border: 0 solid #c6c6c6; border-left-width: 1px; border-right-width: 1px; box-sizing: border-box; }
  .strip.top { height: 10px; border-bottom-width: 1px; }
  .strip.bottom { height: 6px; border-top-width: 1px; margin-top: 12px; }
  .page { height: 794px; margin-top: 10px; box-sizing: border-box; border: 1px solid #c6c6c6; background: #fff; position: relative; display: flex; flex-direction: column; color: #1c1c1c; font-family: "Liberation Serif", "Noto Sans CJK SC", serif; font-size: 10.35px; padding-top: 39px; }
  .crop { position: absolute; width: 17px; height: 17px; box-sizing: border-box; border: 0 solid #aaa; }
  .crop.tl { left: 50px; top: 50px; border-right-width: 1px; border-bottom-width: 1px; }
  .crop.tr { right: 50px; top: 50px; border-left-width: 1px; border-bottom-width: 1px; }
  .crop.bl { left: 50px; bottom: 49px; border-right-width: 1px; border-top-width: 1px; }
  .crop.br { right: 50px; bottom: 49px; border-left-width: 1px; border-top-width: 1px; }
  .hdr { text-align: center; color: #93b5dc; font-weight: 700; font-size: 12px; line-height: 14px; height: 14px; flex: none; padding-left: 8px; }
  :global(.pm) { color: #a0a0a0; font-style: normal; font-weight: 400; font-size: 10px; line-height: 0; font-family: "DejaVu Sans", sans-serif; }
  :global(.wb) { text-decoration: underline wavy #2a6fd0 1px; text-underline-offset: 1px; }
  :global(.wr) { text-decoration: underline wavy #e02020 1px; text-underline-offset: 1px; }
  table { border-collapse: collapse; table-layout: fixed; flex: none; }
  td { border: 1px solid #111; padding: 0; position: relative; white-space: pre; line-height: 13.500px; font-size: 10.35px; }
  .c { text-align: center; }
  .ph6 { padding-left: 6px; }
  .ph8 { padding-left: 8px; }
  .fit { margin: -2px 0; }
  .tl-table { width: 455px; margin: 14px 0 0 51px; height: 103px; }
  .body-l { padding: 0 0 0 6px; font-size: 9.9px; line-height: 12.800px; vertical-align: top; }
  .num14 { padding-left: 8px; }
  .top-m { vertical-align: top; line-height: 13px; padding-left: 9px; }
  :global(.pm.end) { position: absolute; left: calc(100% + 2px); top: 7px; }
  .mk { line-height: 13px; height: 13px; flex: none; }
  .m1 { margin: 5px 0 0 67px; }
  .m2 { margin: 10px 0 0 67px; }
  .m3 { margin: 9px 0 0 201px; }
  .m4 { margin: 6px 0 0 66px; }
  .m5 { margin: 9px 0 0 203px; }
  .ttl { margin: 18px 0 8px; text-align: center; font-size: 15px; line-height: 20px; height: 20px; font-weight: 700; color: #111; flex: none; padding-left: 8px; }
  .tr-table { width: 483px; margin-left: 38px; }
  .hd { height: 41px; }
  .xh { padding-left: 3px; }
  .vtop { vertical-align: top; padding: 0 0 0 4px; }
  .std { padding-left: 5px; }
  .resp { vertical-align: top; line-height: 13px; padding: 0 0 0 4px; }
  .foot { margin-top: auto; margin-bottom: 45px; text-align: center; font-size: 9px; line-height: 12px; color: #555; font-family: "Liberation Sans", sans-serif; flex: none; }
  .redbox { position: absolute; left: 445px; top: 138px; width: 82px; height: 525px; box-sizing: border-box; border: 4px solid #cc1428; }

  /* status */
  .status { height: 20px; flex: none; background: #f1f1f1; border-top: 1px solid #c6c6c6; box-sizing: border-box; display: grid; grid-template-columns: 123px 95px 31px 122px 19px 80px 1fr; padding-left: 12px; align-items: center; color: #555; line-height: 19px; white-space: nowrap; }
  .status > span { margin-top: -3px; }
  .st-first { word-spacing: 2px; }
  .st-ic { display: flex; align-items: center; }
  .acc { color: #222; font-weight: 500; }
  .st-right { display: flex; height: 19px; width: 300px; margin-left: auto; }
  .st-tool { height: 19px; }
  .st-tool :global(.printon) { width: 40px; height: 19px; background: #c6c6c6; display: flex; align-items: center; justify-content: center; }
  .st-tool :global(.pct) { font-size: 12px; color: #555; }
</style>
